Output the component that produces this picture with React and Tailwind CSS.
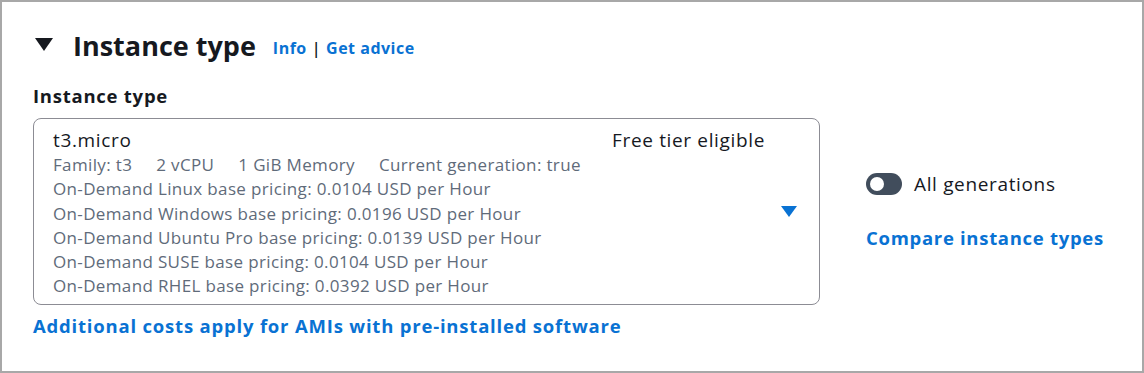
import React, { useState } from "react";

const rows = [
  "On-Demand Linux base pricing: 0.0104 USD per Hour",
  "On-Demand Windows base pricing: 0.0196 USD per Hour",
  "On-Demand Ubuntu Pro base pricing: 0.0139 USD per Hour",
  "On-Demand SUSE base pricing: 0.0104 USD per Hour",
  "On-Demand RHEL base pricing: 0.0392 USD per Hour",
];

export default function App() {
  const [allGens, setAllGens] = useState(false);

  return (
    <div
      className="w-[1144px] h-[373px] border-2 border-[#a8a8a8] bg-white pl-[31px] pt-[25px] text-[#16191f]"
      style={{ fontFamily: '"Open Sans", "Noto Sans", sans-serif' }}
    >
      {/* header */}
      <div className="flex items-center h-[36px]">
        <svg width="18" height="14" viewBox="0 0 18 14" className="ml-[2px] mr-[20px]">
          <polygon points="0,0 18,0 9,13" fill="#16191f" />
        </svg>
        <h2 className="text-[27px] font-bold leading-none">Instance type</h2>
        <div className="flex items-center ml-[17px] mt-[6px] text-[16px] font-bold tracking-[0.5px]">
          <a className="text-[#0972d3]">Info</a>
          <span className="mx-[5px] font-semibold text-[#0f141a]">|</span>
          <a className="text-[#0972d3]">Get advice</a>
        </div>
      </div>

      <div className="mt-[21px] text-[18.5px] font-bold tracking-[0.75px] leading-[24px]">Instance type</div>

      <div className="flex mt-[10px]">
        <div className="w-[787px] h-[187px] rounded-[8px] border border-[#8c8c94] pl-[19px] pr-[22px] pt-[8px] flex">
          <div className="flex-1">
            <div className="flex justify-between text-[19px] tracking-[0.65px] leading-[26px]">
              <span>t3.micro</span>
              <span className="mr-[16px]">Free tier eligible</span>
            </div>
            <div className="text-[17px] tracking-[0.35px] leading-[24.3px] text-[#5f6b7a]">
              <div className="flex gap-[24px]">
                <span>Family: t3</span>
                <span>2 vCPU</span>
                <span>1 GiB Memory</span>
                <span>Current generation: true</span>
              </div>
              {rows.map((r) => (
                <div key={r}>{r}</div>
              ))}
            </div>
          </div>
          <div className="flex items-center">
            <svg width="16" height="12" viewBox="0 0 16 12" className="mt-[-8px]">
              <polygon points="0,0 16,0 8,11" fill="#0972d3" />
            </svg>
          </div>
        </div>

        <div className="ml-[46px] pt-[54px]">
          <label className="flex items-center gap-[12px] cursor-pointer" onClick={() => setAllGens((v) => !v)}>
            <span className="relative w-[36px] h-[22px] rounded-full bg-[#414d5c]">
              <span
                className={
                  allGens
                    ? "absolute top-[4px] left-[18px] w-[14px] h-[14px] rounded-full bg-white"
                    : "absolute top-[4px] left-[4px] w-[14px] h-[14px] rounded-full bg-white"
                }
              />
            </span>
            <span className="text-[19px] tracking-[0.65px] leading-[24px]">All generations</span>
          </label>
          <a className="block mt-[30px] text-[18.5px] font-bold tracking-[0.7px] leading-[24px] text-[#0972d3]">
            Compare instance types
          </a>
        </div>
      </div>

      <a className="block mt-[9px] text-[18.5px] font-bold tracking-[0.8px] leading-[24px] text-[#0972d3]">
        Additional costs apply for AMIs with pre-installed software
      </a>
    </div>
  );
}
